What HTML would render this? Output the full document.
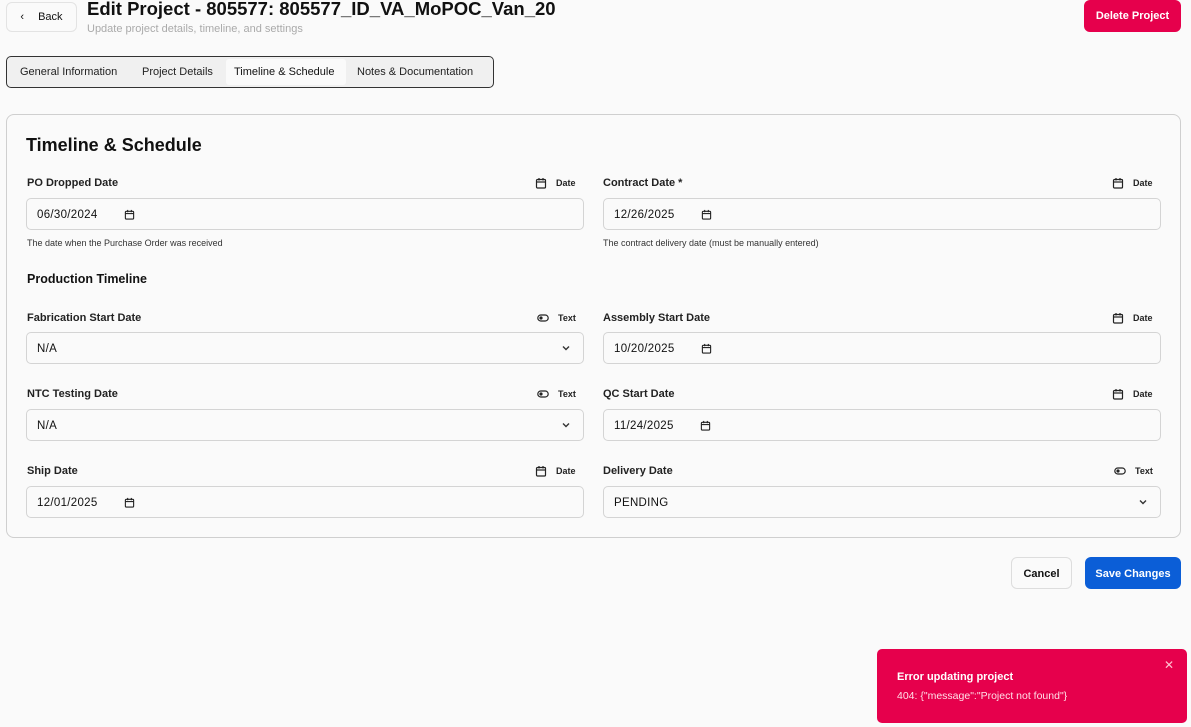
<!DOCTYPE html>
<html><head><meta charset="utf-8"><style>
*{box-sizing:border-box;margin:0;padding:0}
body{width:1191px;height:727px;background:#fafafa;font-family:"Liberation Sans",sans-serif;color:#111;position:relative;overflow:hidden}
.a{position:absolute}
.btn{position:absolute;border-radius:6px;font-size:11px;font-weight:bold;display:flex;align-items:center;justify-content:center}
.lbl{position:absolute;font-size:11px;font-weight:bold;color:#222}
.tag{position:absolute;font-size:9px;font-weight:bold;display:flex;align-items:center;gap:9px;color:#222}
.inp{position:absolute;height:32px;border:1px solid #d4d4d4;border-radius:5px;background:#fafafa;font-size:11.5px;letter-spacing:0.3px;display:flex;align-items:center;padding-left:10px;padding-top:1px;color:#111}
.help{position:absolute;font-size:9px;color:#333}
.cal{display:inline-block;margin-left:26px}
.chev{position:absolute;right:12px;top:10px}
</style></head><body>
<div class="btn" style="left:6px;top:2px;width:71px;height:30px;border:1px solid #e3e3e3;background:#fafafa;font-weight:normal;color:#111"><span style="margin-right:14px;font-size:11px">‹</span>Back</div>
<div class="a" style="left:87px;top:-2px;font-size:18.5px;font-weight:bold">Edit Project - 805577: 805577_ID_VA_MoPOC_Van_20</div>
<div class="a" style="left:87px;top:23px;font-size:11px;color:#aaa">Update project details, timeline, and settings</div>
<div class="btn" style="left:1084px;top:0;width:97px;height:32px;background:#e6004c;color:#fff">Delete Project</div>

<div class="a" style="left:6px;top:56px;width:488px;height:32px;border:1px solid #333;border-radius:5px;background:#f0f0f0"></div>
<div class="a" style="left:226px;top:59px;width:120px;height:26px;background:#fafafa;border-radius:3px"></div>
<div class="a" style="left:20px;top:66px;font-size:11px;color:#222">General Information</div>
<div class="a" style="left:142px;top:66px;font-size:11px;color:#222">Project Details</div>
<div class="a" style="left:234px;top:66px;font-size:11px;color:#111">Timeline &amp; Schedule</div>
<div class="a" style="left:357px;top:66px;font-size:11px;color:#222">Notes &amp; Documentation</div>

<div class="a" style="left:6px;top:114px;width:1175px;height:424px;border:1px solid #cfcfcf;border-radius:8px"></div>
<div class="a" style="left:26px;top:135px;font-size:18px;font-weight:bold;color:#111">Timeline &amp; Schedule</div>

<svg width="0" height="0" style="position:absolute"><defs>
<symbol id="c" viewBox="0 0 12 12"><rect x="1.5" y="2.5" width="9" height="8.5" rx="1" fill="none" stroke="#222" stroke-width="1.2"/><line x1="1.5" y1="5" x2="10.5" y2="5" stroke="#222" stroke-width="1.2"/><line x1="4" y1="1" x2="4" y2="3.5" stroke="#222" stroke-width="1.2"/><line x1="8" y1="1" x2="8" y2="3.5" stroke="#222" stroke-width="1.2"/></symbol>
<symbol id="t" viewBox="0 0 12 12"><rect x="0.8" y="3" width="10.4" height="6" rx="3" fill="none" stroke="#222" stroke-width="1.2"/><circle cx="4" cy="6" r="1.6" fill="#222"/></symbol>
<symbol id="v" viewBox="0 0 10 10"><path d="M2 3.5 L5 6.5 L8 3.5" fill="none" stroke="#333" stroke-width="1.4"/></symbol>
</defs></svg>

<div class="lbl" style="left:27px;top:177px">PO Dropped Date</div>
<div class="tag" style="left:535px;top:177px"><svg width="12" height="12"><use href="#c"/></svg>Date</div>
<div class="inp" style="left:26px;top:198px;width:558px">06/30/2024<svg class="cal" width="11" height="11"><use href="#c"/></svg></div>
<div class="help" style="left:27px;top:238px">The date when the Purchase Order was received</div>

<div class="lbl" style="left:603px;top:177px">Contract Date *</div>
<div class="tag" style="left:1112px;top:177px"><svg width="12" height="12"><use href="#c"/></svg>Date</div>
<div class="inp" style="left:603px;top:198px;width:558px">12/26/2025<svg class="cal" width="11" height="11"><use href="#c"/></svg></div>
<div class="help" style="left:603px;top:238px">The contract delivery date (must be manually entered)</div>

<div class="a" style="left:27px;top:272px;font-size:12.5px;font-weight:bold">Production Timeline</div>

<div class="lbl" style="left:27px;top:312px">Fabrication Start Date</div>
<div class="tag" style="left:537px;top:312px"><svg width="12" height="12"><use href="#t"/></svg>Text</div>
<div class="inp" style="left:26px;top:332px;width:558px">N/A<svg class="chev" width="10" height="10"><use href="#v"/></svg></div>

<div class="lbl" style="left:603px;top:312px">Assembly Start Date</div>
<div class="tag" style="left:1112px;top:312px"><svg width="12" height="12"><use href="#c"/></svg>Date</div>
<div class="inp" style="left:603px;top:332px;width:558px">10/20/2025<svg class="cal" width="11" height="11"><use href="#c"/></svg></div>

<div class="lbl" style="left:27px;top:388px">NTC Testing Date</div>
<div class="tag" style="left:537px;top:388px"><svg width="12" height="12"><use href="#t"/></svg>Text</div>
<div class="inp" style="left:26px;top:409px;width:558px">N/A<svg class="chev" width="10" height="10"><use href="#v"/></svg></div>

<div class="lbl" style="left:603px;top:388px">QC Start Date</div>
<div class="tag" style="left:1112px;top:388px"><svg width="12" height="12"><use href="#c"/></svg>Date</div>
<div class="inp" style="left:603px;top:409px;width:558px">11/24/2025<svg class="cal" width="11" height="11"><use href="#c"/></svg></div>

<div class="lbl" style="left:27px;top:465px">Ship Date</div>
<div class="tag" style="left:535px;top:465px"><svg width="12" height="12"><use href="#c"/></svg>Date</div>
<div class="inp" style="left:26px;top:486px;width:558px">12/01/2025<svg class="cal" width="11" height="11"><use href="#c"/></svg></div>

<div class="lbl" style="left:603px;top:465px">Delivery Date</div>
<div class="tag" style="left:1114px;top:465px"><svg width="12" height="12"><use href="#t"/></svg>Text</div>
<div class="inp" style="left:603px;top:486px;width:558px">PENDING<svg class="chev" width="10" height="10"><use href="#v"/></svg></div>

<div class="btn" style="left:1011px;top:557px;width:61px;height:32px;border:1px solid #ddd;background:#fafafa;color:#111;padding-top:2px">Cancel</div>
<div class="btn" style="left:1085px;top:557px;width:96px;height:32px;background:#0b5ed7;color:#fff;padding-top:2px">Save Changes</div>

<div class="a" style="left:877px;top:649px;width:310px;height:74px;background:#e6004c;border-radius:5px;color:#fff">
<div class="a" style="left:20px;top:22px;font-size:11px;font-weight:bold">Error updating project</div>
<div class="a" style="left:20px;top:41px;font-size:10.5px;color:#ffe0e8">404: {"message":"Project not found"}</div>
<div class="a" style="left:287px;top:9px;font-size:12px;color:#ffc0d0">✕</div>
</div>
</body></html>
